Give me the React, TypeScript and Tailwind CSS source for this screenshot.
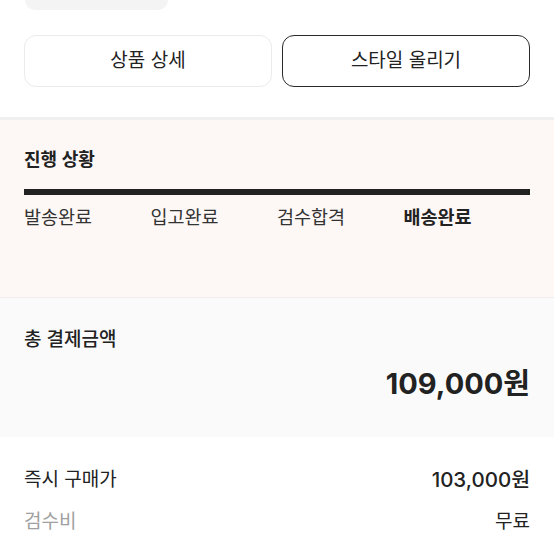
const FONT = "font-['Inter','Noto_Sans_CJK_KR',sans-serif]"

const STEPS = [
  { label: '발송완료', done: false },
  { label: '입고완료', done: false },
  { label: '검수합격', done: false },
  { label: '배송완료', done: true },
]

export default function App() {
  return (
    <div className={`w-[554px] h-[554px] overflow-hidden bg-white text-[#222] ${FONT}`}>
      {/* Top actions */}
      <div className="px-6 pb-[30px]">
        <div className="ml-px w-[143px] h-[10px] rounded-b-xl bg-[#f4f4f4]" />
        <div className="mt-[25px] grid grid-cols-2 gap-[10px]">
          <button className="h-[52px] rounded-xl border border-[#ebebeb] bg-white text-[19px] text-[#222]">상품 상세</button>
          <button className="h-[52px] rounded-xl border-[1.5px] border-[#2a2a2a] bg-white text-[19px] text-[#222]">스타일 올리기</button>
        </div>
      </div>
      <div className="h-[3px] bg-[#f0f0f0]" />

      {/* Progress */}
      <div className="h-[177px] bg-[#fdf7f5] px-6 pt-[29px]">
        <h2 className="text-[18px] leading-[22px] font-semibold">진행 상황</h2>
        <div className="mt-[18px] h-[6px] bg-[#222]" />
        <div className="mt-[11px] grid grid-cols-4">
          {STEPS.map(s => (
            <span key={s.label} className={`text-[18.5px] leading-[22px] ${s.done ? 'font-semibold text-[#222]' : 'text-[#333]'}`}>{s.label}</span>
          ))}
        </div>
      </div>
      <div className="h-px bg-[#eeeeee]" />

      {/* Total */}
      <div className="h-[139px] bg-[#fafafa] px-6 pt-[31px]">
        <p className="text-[19px] leading-[22px] font-medium">총 결제금액</p>
        <p className="mt-[15px] text-right text-[29px] leading-[36px] font-bold">109,000원</p>
      </div>

      {/* Breakdown */}
      <div className="px-6 pt-[32px] space-y-[20px]">
        <div className="flex justify-between items-center leading-[22px]">
          <span className="text-[19px]">즉시 구매가</span>
          <span className="text-[20.5px] font-medium">103,000원</span>
        </div>
        <div className="flex justify-between items-center text-[19px] leading-[22px]">
          <span className="text-[#a0a0a0]">검수비</span>
          <span>무료</span>
        </div>
      </div>
    </div>
  )
}
